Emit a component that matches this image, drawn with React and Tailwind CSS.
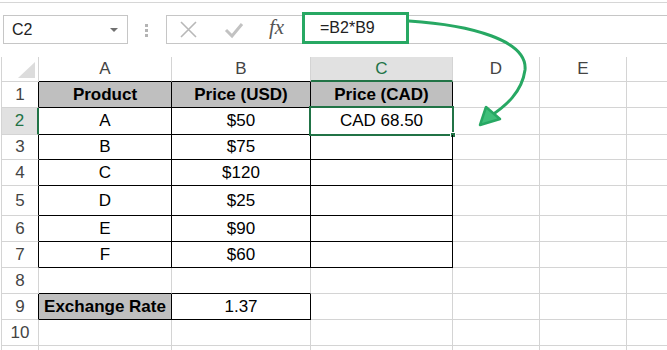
import React from 'react'

// row heights in px, row 1..11
const ROWS = [
  { n: 1, h: 26, a: 'Product', b: 'Price (USD)', c: 'Price (CAD)', head: true },
  { n: 2, h: 27, a: 'A', b: '$50', c: 'CAD 68.50' },
  { n: 3, h: 25, a: 'B', b: '$75' },
  { n: 4, h: 26, a: 'C', b: '$120' },
  { n: 5, h: 30, a: 'D', b: '$25' },
  { n: 6, h: 26, a: 'E', b: '$90' },
  { n: 7, h: 26, a: 'F', b: '$60' },
  { n: 8, h: 26 },
  { n: 9, h: 26, a: 'Exchange Rate', b: '1.37', rate: true },
  { n: 10, h: 26 },
  { n: 11, h: 26, hideNum: true },
]

const inTable = (n) => n >= 1 && n <= 7

function FormulaBar() {
  return (
    <div className="relative h-[54px] flex items-start">
      <div className="ml-[3px] mt-[12px] w-[125px] h-[29px] border border-[#c6c6c6] flex items-center justify-between pl-[8px] pr-[9px] text-[16px] text-[#222]">
        <span>C2</span>
        <span className="w-0 h-0 border-l-[4px] border-r-[4px] border-t-[4px] border-l-transparent border-r-transparent border-t-[#707070]" />
      </div>
      <div className="ml-[17px] mt-[21px] flex flex-col gap-[2px]">
        <span className="w-[3px] h-[3px] bg-[#b4b4b4]" />
        <span className="w-[3px] h-[3px] bg-[#b4b4b4]" />
        <span className="w-[3px] h-[3px] bg-[#b4b4b4]" />
      </div>
      <div className="ml-[18px] mt-[12px] flex-1 h-[29px] border-y border-l border-[#c6c6c6] flex items-center">
        <svg width="135" height="27" viewBox="0 0 135 27" className="shrink-0">
          <path d="M14 6 L29 21 M29 6 L14 21" stroke="#b8b8b8" strokeWidth="1.6" fill="none" />
          <path d="M59 14 L65 20 L75 8" stroke="#c2c2c2" strokeWidth="3" fill="none" />
        </svg>
      </div>
      <span className="absolute left-[269px] top-[10px] leading-none pt-[4px] text-[21px] italic text-[#555] font-['Liberation_Serif',serif]">
        fx
      </span>
      <div className="absolute left-[302px] top-[9px] w-[107px] h-[32px] border-[3px] border-[#27a863] bg-white flex items-center pl-[15px] text-[16px] text-[#222]">
        =B2*B9
      </div>
    </div>
  )
}

function ColHeader() {
  const cols = [
    { w: 'w-[133px]', t: 'A', b: 'border-b-black' },
    { w: 'w-[139px]', t: 'B', b: 'border-b-black' },
    { w: 'w-[142px]', t: 'C', sel: true },
    { w: 'w-[87px]', t: 'D', b: 'border-b-[#d4d4d4]' },
    { w: 'w-[87px]', t: 'E', b: 'border-b-[#d4d4d4]' },
  ]
  return (
    <div className="flex h-[25px] text-[17px]">
      <div className="relative w-[37px] shrink-0 border-r border-b border-[#d4d4d4]">
        <svg className="absolute right-[3px] bottom-[3px]" width="17" height="16" viewBox="0 0 17 16">
          <polygon points="17,0 17,16 0,16" fill="#dcdcdc" />
        </svg>
      </div>
      {cols.map((c) =>
        c.sel ? (
          <div key={c.t} className={`${c.w} shrink-0 bg-[#e1e1e1] border-r border-r-[#d4d4d4] border-b-2 border-b-[#217346] text-[#217346] flex items-center justify-center`}>
            {c.t}
          </div>
        ) : (
          <div key={c.t} className={`${c.w} shrink-0 border-r border-r-[#d4d4d4] border-b ${c.b} text-[#444] flex items-center justify-center`}>
            {c.t}
          </div>
        )
      )}
      <div className="flex-1 border-b border-[#d4d4d4]" />
    </div>
  )
}

function Row({ r }) {
  const t = inTable(r.n)
  const headerRight =
    r.n === 2 ? 'border-r-2 border-r-[#217346]' : t || r.n === 9 ? 'border-r border-r-black' : 'border-r border-r-[#d4d4d4]'
  const abRight = t || r.n === 9 ? 'border-r-black' : 'border-r-[#d4d4d4]'
  const abBottom = t || r.n === 8 || r.n === 9 ? 'border-b-black' : 'border-b-[#d4d4d4]'
  const cRight = t ? 'border-r-black' : 'border-r-[#d4d4d4]'
  const cBottom = t ? 'border-b-black' : 'border-b-[#d4d4d4]'
  const fill = r.head ? 'bg-[#bfbfbf] font-bold' : ''
  const aFill = r.head || r.rate ? 'bg-[#bfbfbf] font-bold' : ''
  return (
    <div className="flex text-[17px] text-black" style={{ height: r.h }}>
      <div
        className={`w-[37px] shrink-0 border-b border-b-[#d4d4d4] ${headerRight} flex items-center justify-center ${
          r.n === 2 ? 'bg-[#e1e1e1] text-[#217346]' : 'text-[#444]'
        }`}
      >
        {r.hideNum ? '' : r.n}
      </div>
      <div className={`w-[133px] shrink-0 border-r border-b ${abRight} ${abBottom} ${aFill} flex items-center justify-center`}>
        {r.a}
      </div>
      <div className={`w-[139px] shrink-0 border-r border-b ${abRight} ${abBottom} ${fill} flex items-center justify-center`}>
        {r.b}
      </div>
      <div className={`relative w-[142px] shrink-0 border-r border-b ${cRight} ${cBottom} ${fill} flex items-center justify-center`}>
        {r.c}
        {r.n === 2 && (
          <>
            <span className="absolute -left-[2px] -top-[2px] -right-[2px] -bottom-[2px] border-2 border-[#217346] pointer-events-none" />
            <span className="absolute -right-[4px] -bottom-[4px] w-[6px] h-[6px] bg-[#217346] border border-white" />
          </>
        )}
      </div>
      <div className="w-[87px] shrink-0 border-r border-b border-[#d4d4d4]" />
      <div className="w-[87px] shrink-0 border-r border-b border-[#d4d4d4]" />
      <div className="flex-1 border-b border-[#d4d4d4]" />
    </div>
  )
}

function Arrow() {
  return (
    <svg className="absolute left-0 top-0 pointer-events-none" width="667" height="350" viewBox="0 0 667 350">
      <path
        d="M409 21 C 470 25 528 40 525 70 C 522 92 506 106 489 117"
        stroke="#27a863"
        strokeWidth="3"
        fill="none"
        strokeLinecap="round"
      />
      <polygon points="480,125 500,119 486,107" fill="#3fbf7a" stroke="#27a863" strokeWidth="2.5" strokeLinejoin="round" />
    </svg>
  )
}

export default function App() {
  return (
    <div className="relative w-[667px] h-[350px] overflow-hidden bg-white font-['Liberation_Sans',Arial,sans-serif]">
      <div className="h-[3px] border-b border-[#d6d6d6]" />
      <FormulaBar />
      <div className="ml-[1px] border-l border-[#d4d4d4]">
        <ColHeader />
        {ROWS.map((r) => (
          <Row key={r.n} r={r} />
        ))}
      </div>
      <Arrow />
    </div>
  )
}
